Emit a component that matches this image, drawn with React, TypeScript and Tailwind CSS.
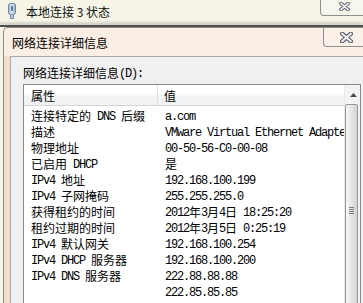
import React from "react";

const MONO = "inline-block h-[16px] pt-[3px] align-top font-['Liberation_Mono',monospace] text-[12px] leading-[13px] tracking-[-1.2px] whitespace-pre";
const CJK = "inline-block h-[16px] align-top leading-[16px]";

function Mixed({ text }: { text: string }) {
  const parts = text.split(/([\x20-\x7e]+)/).filter((p) => p.length > 0);
  return (
    <>
      {parts.map((p, i) =>
        /^[\x20-\x7e]+$/.test(p) ? (
          <span key={i} className={MONO}>
            {p}
          </span>
        ) : (
          <span key={i} className={CJK}>{p}</span>
        )
      )}
    </>
  );
}

function PlugIcon() {
  return (
    <svg width="10" height="16" viewBox="0 0 10 16">
      <defs>
        <linearGradient id="pg" x1="0" x2="1" y1="0" y2="0">
          <stop offset="0" stopColor="#9fb6cc" />
          <stop offset="0.5" stopColor="#e4eef8" />
          <stop offset="1" stopColor="#8aa3bc" />
        </linearGradient>
      </defs>
      <rect x="1.5" y="0.5" width="7" height="11" rx="2" fill="url(#pg)" stroke="#6d87a3" />
      <rect x="4" y="3" width="2" height="5" fill="#5f7d9c" />
      <rect x="3.5" y="11.5" width="3" height="4" fill="#b8c8d8" stroke="#7d93aa" />
    </svg>
  );
}

function CloseX({ w, h }: { w: number; h: number }) {
  return (
    <svg width={w} height={h} viewBox="0 0 12 10">
      <path d="M2 1.5 L10 8.5 M10 1.5 L2 8.5" stroke="#5b5e6b" strokeWidth="4" strokeLinecap="round" />
      <path d="M2 1.5 L10 8.5 M10 1.5 L2 8.5" stroke="#eef0f4" strokeWidth="2" strokeLinecap="round" />
    </svg>
  );
}

const rows: [string, string][] = [
  ["连接特定的 DNS 后缀", "a.com"],
  ["描述", "VMware Virtual Ethernet Adapter for VMnet1"],
  ["物理地址", "00-50-56-C0-00-08"],
  ["已启用 DHCP", "是"],
  ["IPv4 地址", "192.168.100.199"],
  ["IPv4 子网掩码", "255.255.255.0"],
  ["获得租约的时间", "2012年3月4日 18:25:20"],
  ["租约过期的时间", "2012年3月5日 0:25:19"],
  ["IPv4 默认网关", "192.168.100.254"],
  ["IPv4 DHCP 服务器", "192.168.100.200"],
  ["IPv4 DNS 服务器", "222.88.88.88"],
  ["", "222.85.85.85"],
];

export default function App() {
  return (
    <div className="w-[363px] h-[303px] overflow-hidden bg-[#f5f4e7] flex flex-col font-['Noto_Sans_CJK_SC',sans-serif] text-[12px] text-black">
      {/* outer title bar */}
      <div className="h-[25px] shrink-0 flex items-start">
        <div className="pt-[3px] pl-[7px]">
          <PlugIcon />
        </div>
        <div className="ml-[9px] mt-[4px] leading-[16px] text-[#111]">本地连接 3 状态</div>
        <div className="ml-auto -mr-[8px] w-[51px] h-[16px] shrink-0 border border-t-0 border-[#8e8e8e] rounded-b-[4px] bg-[#f8f7ed] flex items-start justify-start pl-[18px] pt-[2px]">
          <CloseX w={11} h={9} />
        </div>
      </div>
      <div className="h-[2px] shrink-0 bg-[#505050] shadow-[0_-2px_3px_rgba(0,0,0,0.25)]" />
      {/* inner window */}
      <div className="flex-1 ml-[3px] -mr-[20px] border-l border-t border-[#8a8a8a] rounded-tl-[5px] bg-[#fbeee4] flex flex-col">
        <div className="h-[28px] shrink-0 flex items-start">
          <div className="pl-[8px] pt-[7px] leading-[16px]">网络连接详细信息</div>
          <div className="ml-[215px] w-[46px] h-[19px] shrink-0 border border-t-0 border-[#8e8e8e] rounded-b-[4px] bg-[#fbf0e8] flex items-start pl-[16px] pt-[4px]">
            <CloseX w={13} h={11} />
          </div>
        </div>
        <div className="flex-1 flex pl-[6px] bg-linear-to-r from-[#f3dccb] to-[#fbeee4]">
          <div className="flex-1 bg-[#f0f0f0] border-l border-t border-[#a9a9a9] pt-[8px] pl-[12px]">
            <div className="h-[16px] leading-[16px] whitespace-nowrap">
              <Mixed text="网络连接详细信息(D):" />
            </div>
            <div className="mt-[3px] w-[338px] h-[400px] border border-[#828790] bg-white flex">
              <div className="w-[320px] shrink-0 overflow-hidden flex flex-col">
                <div className="h-[21px] shrink-0 flex border-b border-[#d5d5d5] bg-linear-to-b from-[#ffffff] from-40% to-[#f1f2f4] to-60%">
                  <div className="w-[134px] shrink-0 pl-[7px] pt-[3px] leading-[16px] border-r border-[#dedfe1]">属性</div>
                  <div className="pl-[6px] pt-[3px] leading-[16px]">值</div>
                </div>
                <div className="pt-[2px] flex flex-col">
                  {rows.map(([k, v], i) => (
                    <div key={i} className="h-[16px] shrink-0 flex leading-[16px] whitespace-nowrap overflow-hidden">
                      <div className="w-[134px] shrink-0 pl-[7px]">
                        <Mixed text={k} />
                      </div>
                      <div className="pl-[7px]">
                        <Mixed text={v} />
                      </div>
                    </div>
                  ))}
                </div>
              </div>
              {/* scrollbar */}
              <div className="w-[16px] shrink-0 bg-[#f3f3f3] flex flex-col border-l border-[#e8e8e8]">
                <div className="h-[19px] shrink-0 flex items-center justify-center pl-[1px]">
                  <svg width="7" height="4" viewBox="0 0 7 4">
                    <path d="M3.5 0 L7 4 L0 4 Z" fill="#4a4a4a" />
                  </svg>
                </div>
                <div className="w-[13px] h-[300px] border border-[#979797] rounded-[2px] bg-linear-to-r from-[#f7f7f7] to-[#d3d3d3] flex flex-col items-center pt-[102px]">
                  <div className="w-[5px] h-[1px] bg-[#7a7a7a]" />
                  <div className="w-[5px] h-[1px] mt-[1px] bg-[#7a7a7a]" />
                  <div className="w-[5px] h-[1px] mt-[1px] bg-[#7a7a7a]" />
                  <div className="w-[5px] h-[1px] mt-[1px] bg-[#7a7a7a]" />
                </div>
              </div>
            </div>
          </div>
        </div>
      </div>
    </div>
  );
}
